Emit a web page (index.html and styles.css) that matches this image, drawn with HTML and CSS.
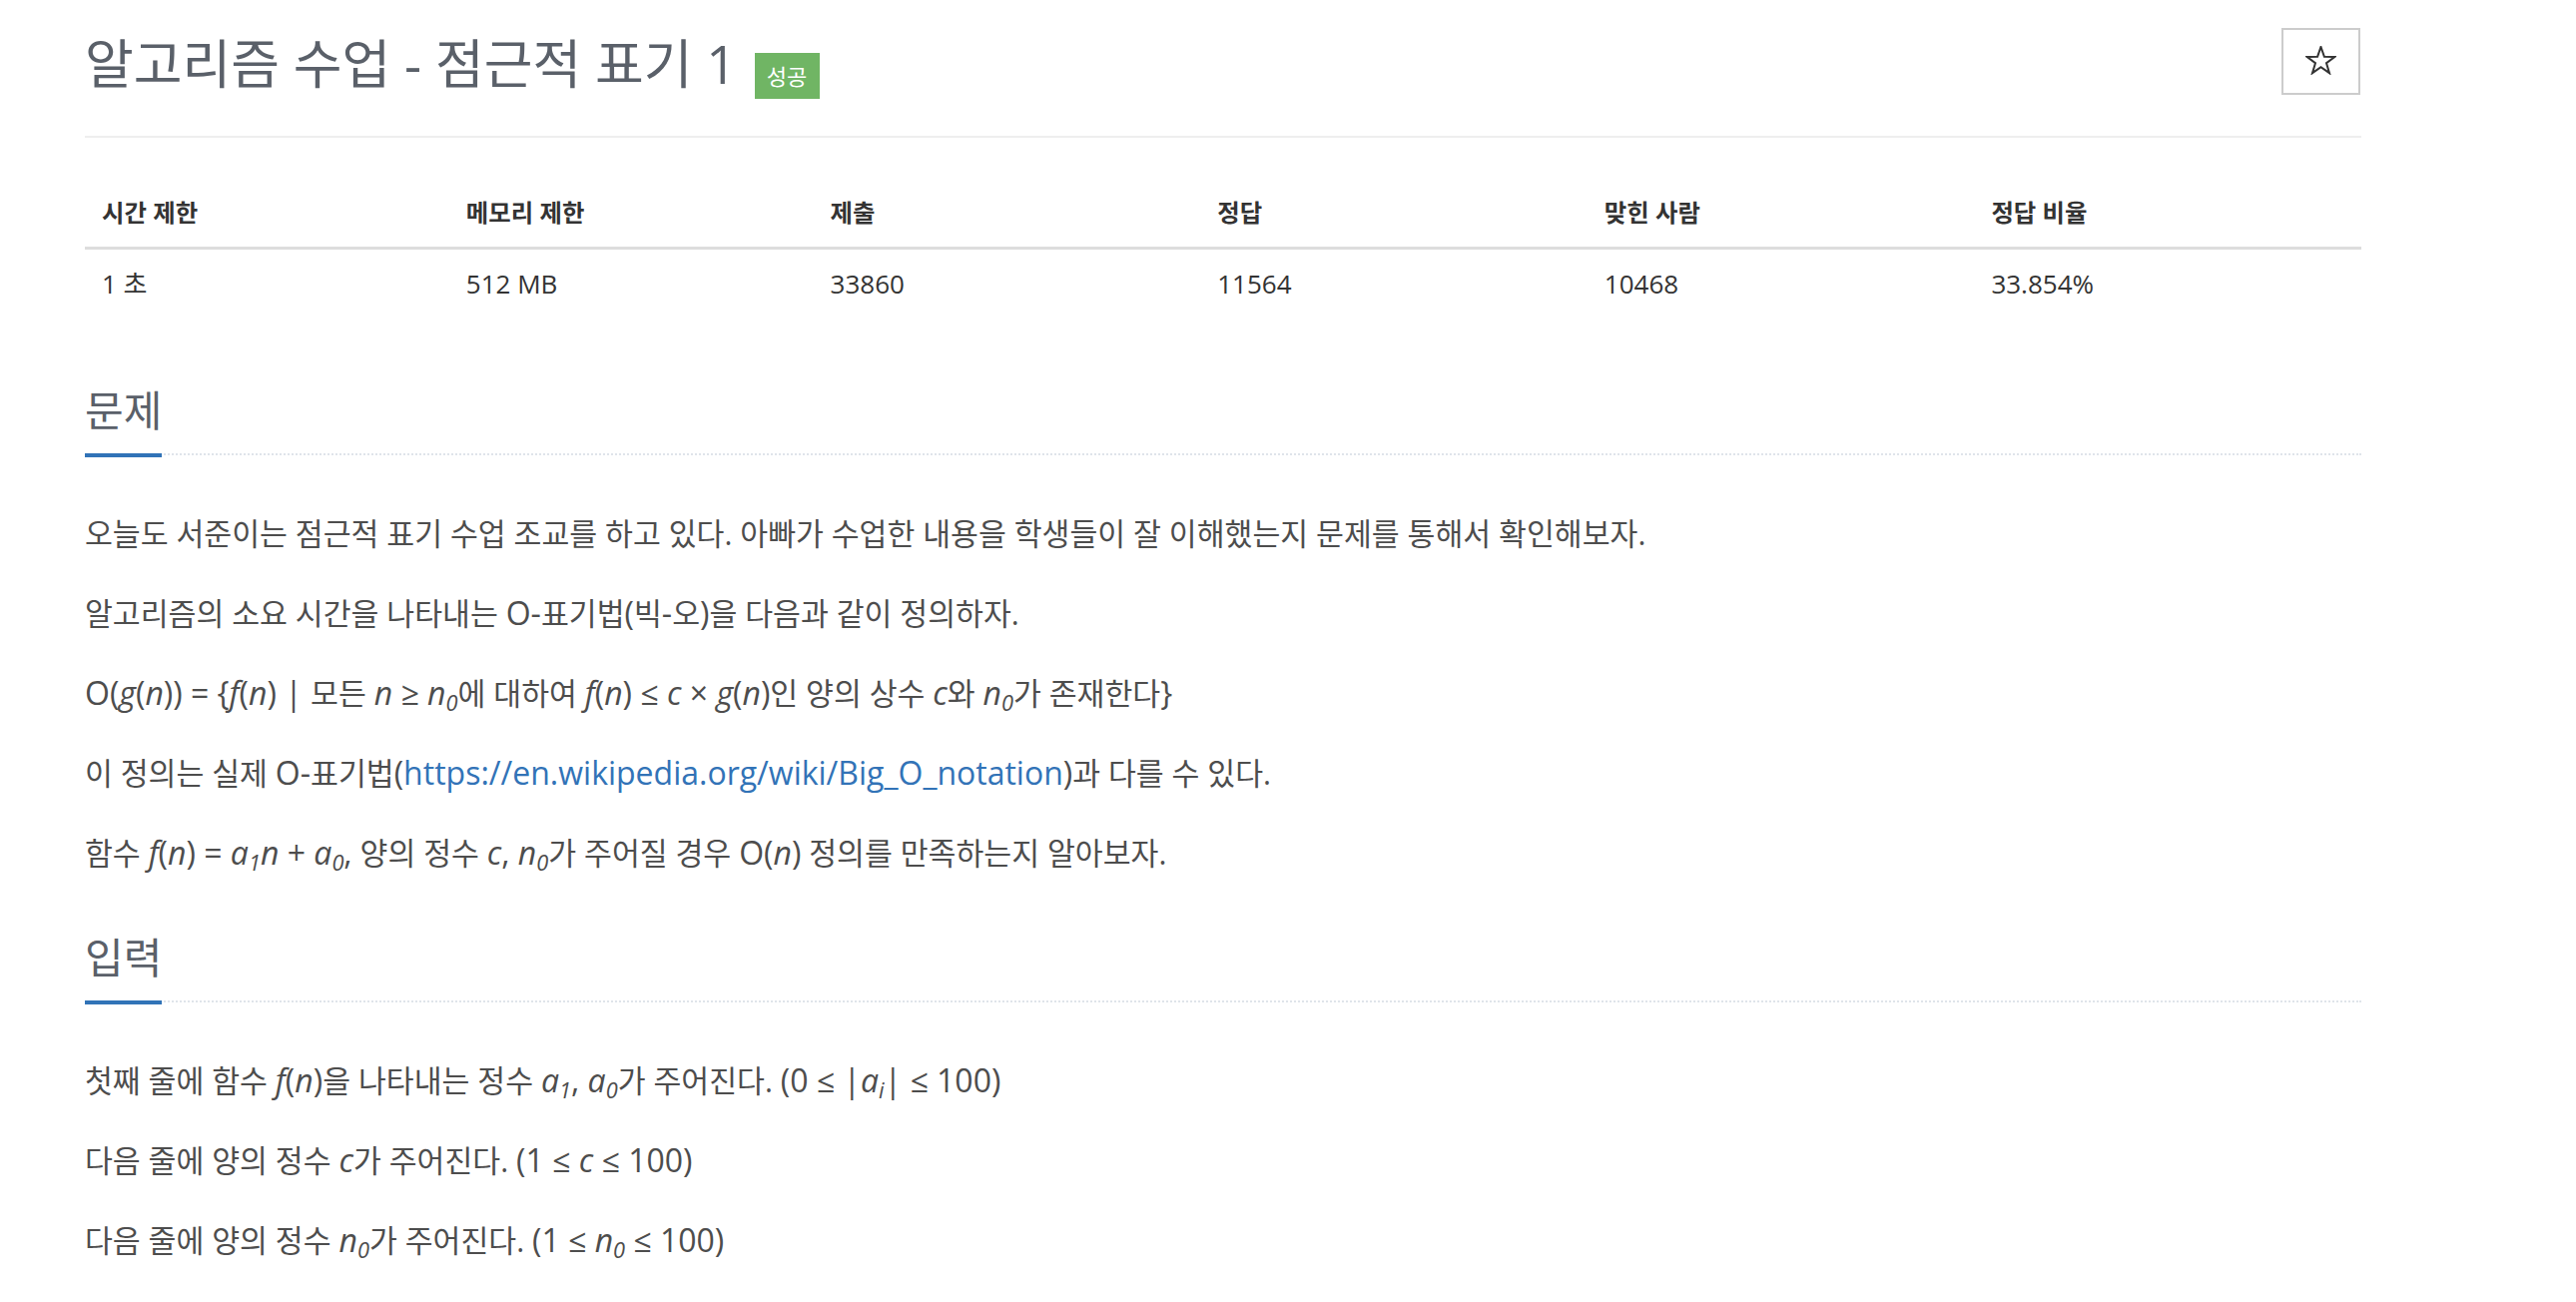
FILE: index.html
```html
<!DOCTYPE html>
<html lang="ko">
<head>
<meta charset="utf-8">
<title>알고리즘 수업 - 점근적 표기 1</title>
<link rel="stylesheet" href="styles.css">
</head>
<body>
<div class="container">
  <div class="page-header">
    <h1 class="title"><span class="title-text">알고리즘 수업 - 점근적 표기 1</span><span class="label-ac">성공</span></h1>
    <button class="star-btn" type="button" aria-label="즐겨찾기">
      <svg class="star-icon" width="31" height="29" viewBox="-1 -1 32 30"><polygon points="15,0 18.53,10.15 29.27,10.36 20.71,16.85 23.82,27.14 15,21 6.18,27.14 9.29,16.85 0.73,10.36 11.47,10.15" fill="none" stroke="#333" stroke-width="2.1" stroke-linejoin="miter"/></svg>
    </button>
  </div>

  <table class="info">
    <colgroup>
      <col class="c16"><col class="c16"><col class="c17"><col class="c17"><col class="c17"><col class="c17">
    </colgroup>
    <thead>
      <tr><th>시간 제한</th><th>메모리 제한</th><th>제출</th><th>정답</th><th>맞힌 사람</th><th>정답 비율</th></tr>
    </thead>
    <tbody>
      <tr><td>1 초</td><td>512 MB</td><td>33860</td><td>11564</td><td>10468</td><td>33.854%</td></tr>
    </tbody>
  </table>

  <section class="section">
    <div class="headline"><h2>문제</h2></div>
    <div class="problem-text">
      <p>오늘도 서준이는 점근적 표기 수업 조교를 하고 있다. 아빠가 수업한 내용을 학생들이 잘 이해했는지 문제를 통해서 확인해보자.</p>
      <p>알고리즘의 소요 시간을 나타내는 <span class="en">O-</span>표기법<span class="en">(</span>빅<span class="en">-</span>오<span class="en">)</span>을 다음과 같이 정의하자.</p>
      <p><span class="en">O(<i>g</i>(<i>n</i>)) = {<i>f</i>(<i>n</i>) | </span>모든 <span class="en"><i>n</i> ≥ <i>n</i><sub>0</sub></span>에 대하여 <span class="en"><i>f</i>(<i>n</i>) ≤ <i>c</i> × <i>g</i>(<i>n</i>)</span>인 양의 상수 <span class="en"><i>c</i></span>와 <span class="en"><i>n</i><sub>0</sub></span>가 존재한다<span class="en">}</span></p>
      <p>이 정의는 실제 <span class="en">O-</span>표기법<span class="en">(<a href="#">https://en.wikipedia.org/wiki/Big_O_notation</a>)</span>과 다를 수 있다.</p>
      <p>함수 <span class="en"><i>f</i>(<i>n</i>) = <i>a</i><sub>1</sub><i>n</i> + <i>a</i><sub>0</sub>,</span> 양의 정수 <span class="en"><i>c</i>, <i>n</i><sub>0</sub></span>가 주어질 경우 <span class="en">O(<i>n</i>)</span> 정의를 만족하는지 알아보자.</p>
    </div>
  </section>

  <section class="section">
    <div class="headline"><h2>입력</h2></div>
    <div class="problem-text">
      <p>첫째 줄에 함수 <span class="en"><i>f</i>(<i>n</i>)</span>을 나타내는 정수 <span class="en"><i>a</i><sub>1</sub>, <i>a</i><sub>0</sub></span>가 주어진다. <span class="en">(0 ≤ |<i>a</i><sub>i</sub>| ≤ 100)</span></p>
      <p>다음 줄에 양의 정수 <span class="en"><i>c</i></span>가 주어진다. <span class="en">(1 ≤ <i>c</i> ≤ 100)</span></p>
      <p>다음 줄에 양의 정수 <span class="en"><i>n</i><sub>0</sub></span>가 주어진다. <span class="en">(1 ≤ <i>n</i><sub>0</sub> ≤ 100)</span></p>
    </div>
  </section>
</div>
</body>
</html>
```

FILE: styles.css
```css
html, body {
  margin: 0;
  padding: 0;
  background: #fff;
}

body {
  font-family: "Open Sans", "Noto Sans CJK KR", sans-serif;
  color: #333;
}

.container {
  width: 2280px;
  margin: 0 0 0 85px;
}

/* ---------- header ---------- */
.page-header {
  display: flex;
  justify-content: space-between;
  align-items: flex-start;
  padding: 28px 0 37px;
  border-bottom: 2px solid #eee;
}

.title {
  display: flex;
  align-items: flex-start;
  margin: 6px 0 0;
  font-weight: normal;
}

.title-text {
  font-size: 53px;
  line-height: 60px;
  color: #5a6069;
}

.label-ac {
  display: inline-flex;
  align-items: center;
  justify-content: center;
  width: 65px;
  height: 46px;
  margin: 19px 0 0 18px;
  background: #70b564;
  color: #fff;
  font-size: 22px;
  line-height: 1;
  font-weight: normal;
}

.star-btn {
  display: flex;
  align-items: center;
  justify-content: center;
  width: 79px;
  height: 67px;
  margin: 0 1px 0 0;
  padding: 0;
  background: #fff;
  border: 2px solid #ccc;
  box-sizing: border-box;
}

.star-icon {
  display: block;
  margin-top: -2px;
}

/* ---------- info table ---------- */
.info {
  width: 100%;
  table-layout: fixed;
  border-collapse: collapse;
  margin: 42px 0 70px;
}

.c16 { width: 16%; }
.c17 { width: 17%; }

.info th {
  text-align: left;
  font-size: 24.4px;
  font-weight: bold;
  line-height: 32px;
  padding: 17px 17px 18px;
  border-bottom: 3px solid #ddd;
  color: #333;
}

.info td {
  font-size: 26px;
  line-height: 32px;
  padding: 18px 17px 17px;
  color: #333;
}

/* ---------- sections ---------- */
.section {
  margin-top: 58px;
}

.headline {
  border-bottom: 2px dotted #dfe4ea;
}

.headline h2 {
  display: inline-block;
  margin: 0 0 -4px;
  padding: 0 0 19px;
  font-size: 42px;
  line-height: 48px;
  font-weight: normal;
  color: #5a6069;
  border-bottom: 4px solid #3173b7;
}

.problem-text {
  margin-top: 57px;
}

.problem-text p {
  margin: 0 0 36px;
  font-size: 30.3px;
  line-height: 44px;
  color: #4d4d4d;
}

.en {
  font-size: 32px;
  line-height: 30px;
}

.en i {
  font-style: italic;
}

.en sub {
  font-size: 0.68em;
  font-style: italic;
  vertical-align: -0.28em;
  line-height: 0;
}

.problem-text a {
  color: #3273b7;
  text-decoration: none;
}
```
